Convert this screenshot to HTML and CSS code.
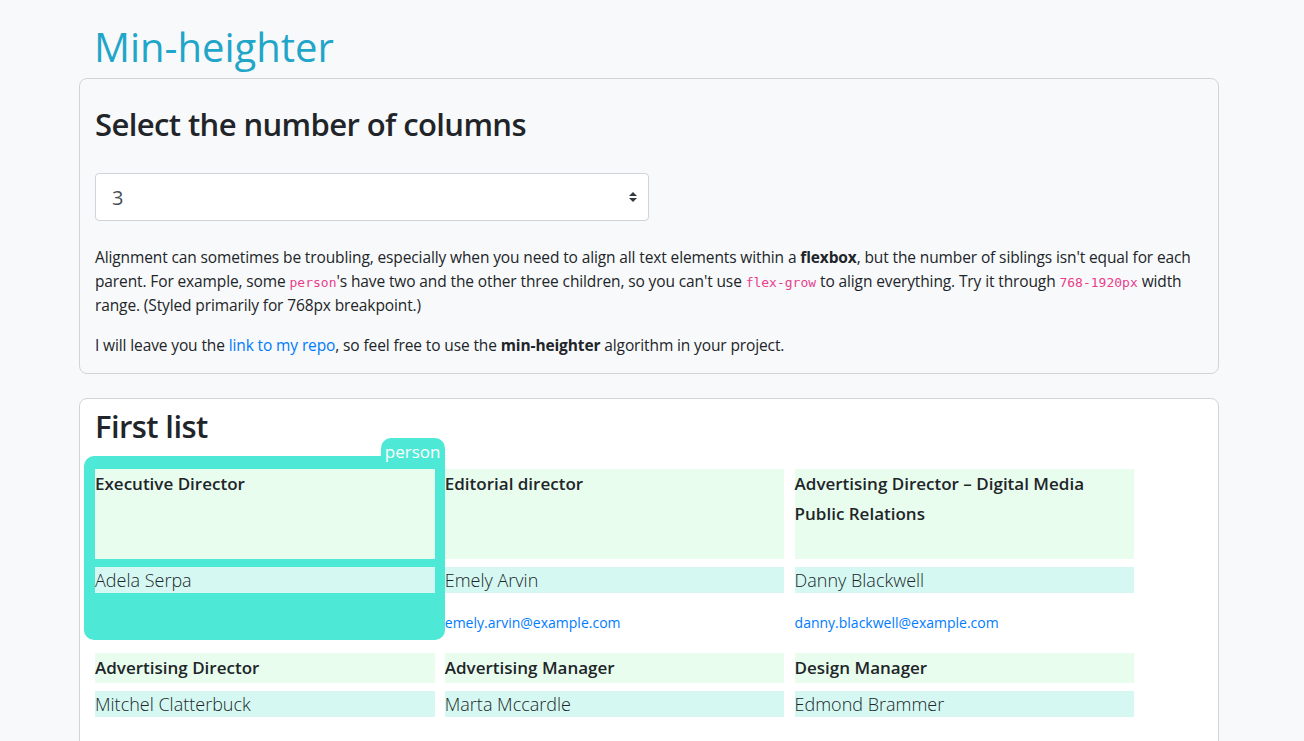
FILE: index.html
```html
<!DOCTYPE html>
<html lang="en">
<head>
<meta charset="utf-8">
<title>Min-heighter</title>
<link rel="stylesheet" href="styles.css">
</head>
<body>
<div class="container">
  <h1 class="title">Min-heighter</h1>

  <section class="card card-intro">
    <h2 class="card-heading">Select the number of columns</h2>
    <div class="select-wrap">
      <select class="select">
        <option>1</option>
        <option>2</option>
        <option selected>3</option>
        <option>4</option>
      </select>
      <svg class="select-icon" width="10" height="12" viewBox="0 0 10 12" aria-hidden="true">
        <path d="M5 1 L9 5 H1 Z" fill="#343a40"/>
        <path d="M5 11 L9 7 H1 Z" fill="#343a40"/>
      </svg>
    </div>
    <p class="text">Alignment can sometimes be troubling, especially when you need to align all text elements within a <b>flexbox</b>, but the number of siblings isn't equal for each parent. For example, some <code>person</code>'s have two and the other three children, so you can't use <code>flex-grow</code> to align everything. Try it through <code>768-1920px</code> width range. (Styled primarily for 768px breakpoint.)</p>
    <p class="text">I will leave you the <a href="#">link to my repo</a>, so feel free to use the <b>min-heighter</b> algorithm in your project.</p>
  </section>

  <section class="card card-list">
    <h2 class="list-heading">First list</h2>
    <div class="people">
      <div class="person person-active">
        <div class="person-overlay"></div>
        <div class="person-tag">person</div>
        <div class="person-title" style="min-height:90px">Executive Director</div>
        <div class="person-name">Adela Serpa</div>
      </div>
      <div class="person">
        <div class="person-title" style="min-height:90px">Editorial director</div>
        <div class="person-name">Emely Arvin</div>
        <a class="person-email" href="#">emely.arvin@example.com</a>
      </div>
      <div class="person">
        <div class="person-title" style="min-height:90px">Advertising Director – Digital Media Public Relations</div>
        <div class="person-name">Danny Blackwell</div>
        <a class="person-email" href="#">danny.blackwell@example.com</a>
      </div>
      <div class="person">
        <div class="person-title" style="min-height:30px">Advertising Director</div>
        <div class="person-name">Mitchel Clatterbuck</div>
        <a class="person-email" href="#">mitchel.clatterbuck@example.com</a>
      </div>
      <div class="person">
        <div class="person-title" style="min-height:30px">Advertising Manager</div>
        <div class="person-name">Marta Mccardle</div>
        <a class="person-email" href="#">marta.mccardle@example.com</a>
      </div>
      <div class="person">
        <div class="person-title" style="min-height:30px">Design Manager</div>
        <div class="person-name">Edmond Brammer</div>
      </div>
    </div>
  </section>
</div>
</body>
</html>
```

FILE: styles.css
```css
* {
  box-sizing: border-box;
}

html, body {
  margin: 0;
  padding: 0;
}

body {
  background: #f8f9fa;
  color: #212529;
  font-family: "Segoe UI", "Open Sans", "Noto Sans", sans-serif;
  font-size: 16px;
  line-height: 1.5;
  overflow: hidden;
}

.container {
  width: 1140px;
  margin-left: 79px;
  padding-top: 23px;
}

.title {
  margin: 0 0 7px;
  padding-left: 15px;
  font-size: 40px;
  font-weight: 400;
  line-height: 1.2;
  color: #1fa6c9;
}

.card {
  border: 1px solid #d3d4d6;
  border-radius: 8px;
}

.card-intro {
  background: #f8f9fa;
  padding: 16px 15px 0;
}

.card-heading {
  margin: 10px 0 30px;
  font-size: 31px;
  font-weight: 600;
  letter-spacing: -0.6px;
  line-height: 38px;
}

.select-wrap {
  position: relative;
  width: 554px;
  margin-bottom: 24px;
}

.select {
  display: block;
  width: 100%;
  height: 48px;
  padding: 0 16px;
  font-family: inherit;
  font-size: 20px;
  color: #495057;
  background: #fff;
  border: 1px solid #ced4da;
  border-radius: 4px;
  appearance: none;
  -webkit-appearance: none;
  outline: none;
}

.select-icon {
  position: absolute;
  right: 11px;
  top: 18px;
  pointer-events: none;
}

.text {
  margin: 0 0 16px;
  font-size: 15.5px;
  line-height: 24px;
  letter-spacing: -0.12px;
}

.text b {
  font-weight: 700;
}

code {
  font-family: "DejaVu Sans Mono", "Liberation Mono", monospace;
  font-size: 13px;
  line-height: 1;
  letter-spacing: 0;
  color: #e83e8c;
}

a {
  color: #007bff;
  text-decoration: none;
}

.card-list {
  background: #fff;
  margin-top: 24px;
  padding: 8px 15px 40px;
}

.list-heading {
  margin: 0 0 24px;
  font-size: 31px;
  font-weight: 600;
  letter-spacing: -0.6px;
  line-height: 38px;
}

.people {
  display: grid;
  grid-template-columns: repeat(3, 339.6px);
  column-gap: 10.2px;
  row-gap: 20px;
}

.person {
  position: relative;
  display: flex;
  flex-direction: column;
}

.person-overlay {
  position: absolute;
  top: -13px;
  left: -11px;
  right: -10px;
  bottom: -7px;
  background: #4ee8d6;
  border-radius: 10px;
  z-index: 0;
}

.person-tag {
  position: absolute;
  top: -31px;
  right: -10px;
  width: 64px;
  height: 30px;
  padding-top: 1px;
  background: #4ee8d6;
  border-radius: 10px 10px 0 0;
  color: #fff;
  font-size: 17px;
  line-height: 26px;
  text-align: center;
  z-index: 0;
}

.person-title,
.person-name,
.person-email {
  position: relative;
  z-index: 1;
}

.person-title {
  background: #e9fdee;
  font-size: 17px;
  font-weight: 600;
  line-height: 30px;
}

.person-name {
  margin-top: 8px;
  background: #d5f9f2;
  font-size: 18px;
  font-weight: 300;
  line-height: 26px;
}

.person-email {
  display: block;
  padding-top: 19px;
  font-size: 14px;
  line-height: 21px;
}
```
